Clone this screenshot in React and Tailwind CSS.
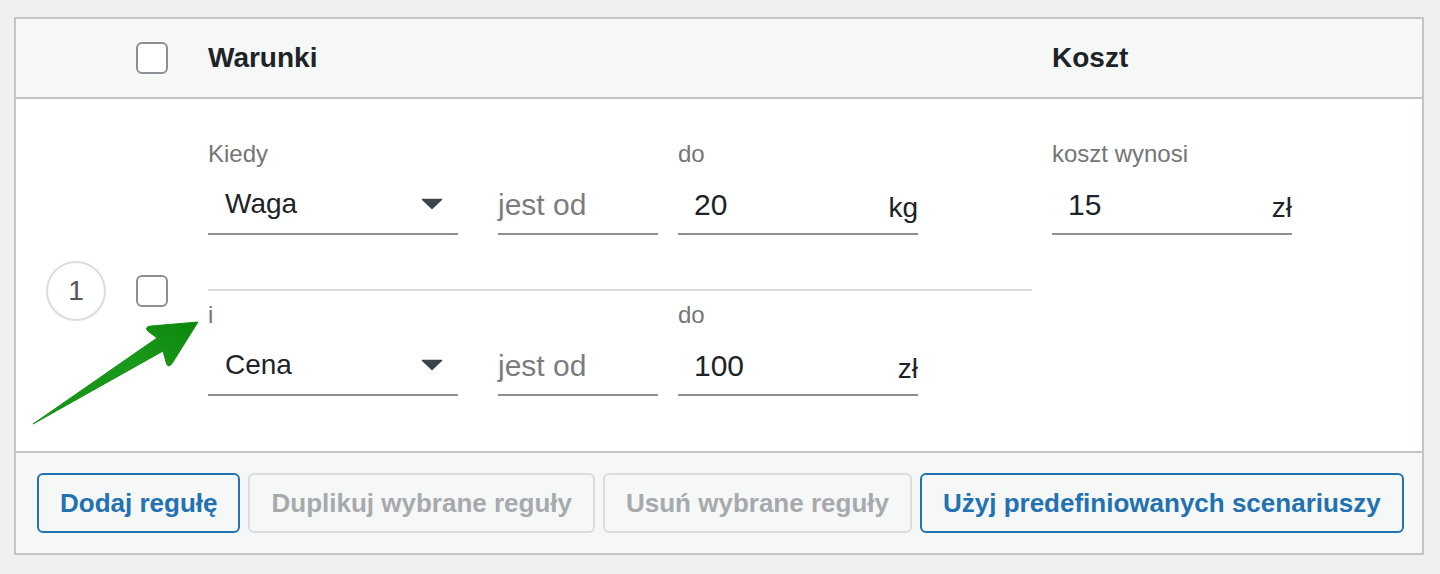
import React from 'react';

const Checkbox = () => (
  <span className="block w-8 h-8 shrink-0 rounded-[6px] border-2 border-[#8c8f94] bg-white" />
);

const Caret = () => (
  <svg width="22" height="12" viewBox="0 0 22 12">
    <path d="M1.5 1.5h19L11 10.5z" fill="#3c434a" stroke="#3c434a" strokeWidth="1.5" strokeLinejoin="round" />
  </svg>
);

const Label = ({ children }) => (
  <div className="h-8 text-[24px] leading-8 text-[#757575]">{children}</div>
);

// one "Kiedy ... jest od ... do" line
const Condition = ({ label, field, value, suffix }) => (
  <div className="flex items-end">
    <div className="w-[250px]">
      <Label>{label}</Label>
      <div className="mt-[5px] h-[60px] flex items-center justify-between pl-[17px] pr-[15px] border-b-2 border-[#8c8f94]">
        <span className="text-[28px] text-[#1d2327]">{field}</span>
        <Caret />
      </div>
    </div>
    <div className="ml-10 w-[160px] h-[60px] flex items-center border-b-2 border-[#8c8f94] text-[30px] text-[#7c7c7c]">
      jest od
    </div>
    <div className="ml-5 w-[240px]">
      <Label>do</Label>
      <div className="mt-[5px] h-[60px] flex items-center justify-between pl-4 border-b-2 border-[#8c8f94]">
        <span className="text-[30px] text-[#1d2327]">{value}</span>
        <span className="mt-[8px] text-[28px] text-[#1d2327]">{suffix}</span>
      </div>
    </div>
  </div>
);

const Button = ({ children, disabled }) => (
  <button
    className={
      disabled
        ? 'shrink-0 whitespace-nowrap h-[60px] px-[21px] rounded-[6px] border-2 border-[#dcdcde] bg-[#f6f7f7] text-[26px] font-bold text-[#a7aaad]'
        : 'shrink-0 whitespace-nowrap h-[60px] px-[21px] rounded-[6px] border-2 border-[#2271b1] bg-[#f6f7f7] text-[26px] font-bold text-[#2271b1]'
    }
  >
    {children}
  </button>
);

const Arrow = () => (
  <svg className="absolute left-0 top-0 pointer-events-none" width="1440" height="574" viewBox="0 0 1440 574">
    <defs>
      <linearGradient id="arrowGreen" x1="0" y1="1" x2="1" y2="0">
        <stop offset="0" stopColor="#129312" />
        <stop offset="0.6" stopColor="#1a9a1a" />
        <stop offset="1" stopColor="#0c870c" />
      </linearGradient>
    </defs>
    <path
      d="M33 424 L157 338 L149 332 Q143 327 151 326 L198 322 L173 362 Q168 370 166 362 L163 351 Z"
      fill="url(#arrowGreen)"
      stroke="#148f14"
      strokeWidth="1"
      strokeLinejoin="round"
    />
  </svg>
);

export default function App() {
  return (
    <div className="relative w-[1440px] h-[574px] bg-[#f0f0f1] pt-[17px] pl-[14px] font-['Liberation_Sans',Arial,sans-serif]">
      <div className="w-[1410px] border-2 border-[#c3c4c7]">
        {/* header */}
        <div className="h-[80px] flex items-center bg-[#f6f7f7] border-b-2 border-[#c3c4c7] pl-[120px]">
          <Checkbox />
          <div className="ml-10 w-[844px] text-[28px] font-bold text-[#1d2327]">Warunki</div>
          <div className="text-[28px] font-bold text-[#1d2327]">Koszt</div>
        </div>

        {/* rule row */}
        <div className="flex bg-white">
          <div className="flex items-center pl-[30px] pt-[31px]">
            <div className="w-[60px] h-[60px] rounded-full border-2 border-[#dcdcde] flex items-center justify-center text-[28px] text-[#50575e]">
              1
            </div>
            <div className="ml-[30px]">
              <Checkbox />
            </div>
          </div>
          <div className="ml-10 w-[824px] pt-[39px] pb-[55px]">
            <Condition label="Kiedy" field="Waga" value="20" suffix="kg" />
            <div className="mt-[54px] pt-2 border-t-2 border-[#dcdcde]">
              <Condition label="i" field="Cena" value="100" suffix="zł" />
            </div>
          </div>
          <div className="ml-5 pt-[39px]">
            <div className="w-[240px]">
              <Label>koszt wynosi</Label>
              <div className="mt-[5px] h-[60px] flex items-center justify-between pl-4 border-b-2 border-[#8c8f94]">
                <span className="text-[30px] text-[#1d2327]">15</span>
                <span className="mt-[8px] text-[28px] text-[#1d2327]">zł</span>
              </div>
            </div>
          </div>
        </div>

        {/* footer */}
        <div className="flex gap-2 bg-[#f6f7f7] border-t-2 border-[#c3c4c7] px-[21px] pt-5 pb-5">
          <Button>Dodaj regułę</Button>
          <Button disabled>Duplikuj wybrane reguły</Button>
          <Button disabled>Usuń wybrane reguły</Button>
          <Button>Użyj predefiniowanych scenariuszy</Button>
        </div>
      </div>
      <Arrow />
    </div>
  );
}
